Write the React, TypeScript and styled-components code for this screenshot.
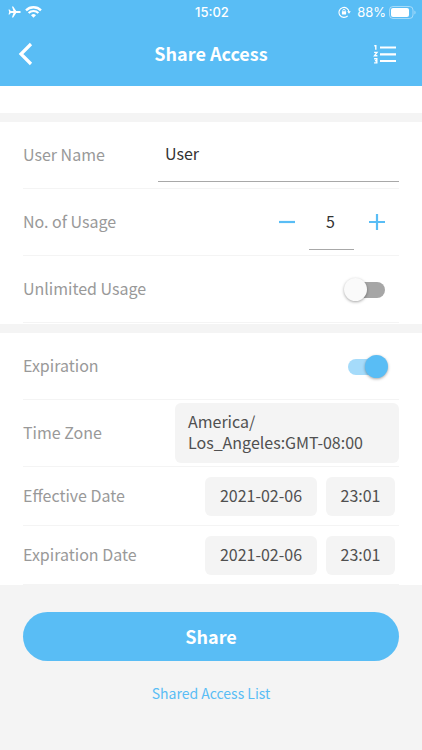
import React, { useState } from "react";
import styled, { createGlobalStyle } from "styled-components";

const blue = "#59bdf5";
const grey = "#f4f4f4";

const GlobalStyle = createGlobalStyle`
  *, *::before, *::after { box-sizing: border-box; }
  html { background: ${grey}; }
  body { margin: 0; }
  body, button, input {
    font-family: "Noto Sans CJK SC", "Open Sans", sans-serif;
    font-size: 16px;
    line-height: 21px;
  }
  button { border: 0; padding: 0; background: none; cursor: pointer; }
`;

const Page = styled.div`
  min-height: 100vh;
  background: ${grey};
`;

const Header = styled.header`
  background: ${blue};
  color: #fff;
`;

const StatusBar = styled.div`
  display: grid;
  grid-template-columns: 1fr auto 1fr;
  align-items: center;
  height: 24px;
  padding: 0 6px 0 8px;
  font-family: Inter, "Liberation Sans", sans-serif;
  font-size: 13px;
`;

const StatusGroup = styled.div<{ $end?: boolean }>`
  display: flex;
  align-items: center;
  justify-content: ${(p) => (p.$end ? "flex-end" : "flex-start")};
  gap: ${(p) => (p.$end ? 3 : 4)}px;
`;

const Clock = styled.span`
  font-weight: 500;
`;

const LockIcon = styled.svg`
  margin-right: 3px;
`;

const NavBar = styled.div`
  display: grid;
  grid-template-columns: 1fr auto 1fr;
  align-items: center;
  height: 62px;
  padding: 0 25px 2px 17px;
`;

const NavButton = styled.button<{ $end?: boolean }>`
  display: flex;
  align-items: center;
  justify-content: ${(p) => (p.$end ? "flex-end" : "flex-start")};
  justify-self: ${(p) => (p.$end ? "end" : "start")};
  width: 40px;
  height: 40px;
  color: #fff;
`;

const Title = styled.h1`
  margin: 0;
  padding: 0 0 2px 8px;
  font-size: 18px;
  line-height: 24px;
  font-weight: 700;
`;

const Spacer = styled.div`
  height: 27px;
  background: #fff;
`;

const Section = styled.section`
  margin-bottom: 9px;
  padding: 0 23px 1px;
  background: #fff;

  &:last-of-type { padding-bottom: 0; }
`;

const Form = styled.form`
  padding-top: 9px;
`;

const Row = styled.div<{ $compact?: boolean }>`
  display: flex;
  align-items: center;
  justify-content: space-between;
  min-height: ${(p) => (p.$compact ? 59 : 67)}px;
  border-bottom: 1px solid #f4f4f4;
  color: #999;
`;

const Label = styled.label`
  padding-bottom: 1px;
`;

const TextInput = styled.input`
  flex: 0 1 241px;
  min-width: 0;
  height: 54px;
  padding: 0 7px 4px;
  border: 0;
  border-bottom: 1px solid #a8a8a8;
  border-radius: 0;
  background: none;
  color: #333;
  outline: none;
`;

const Stepper = styled.div`
  display: flex;
  align-items: center;
`;

const StepButton = styled.button`
  display: flex;
  align-items: center;
  justify-content: center;
  width: 45px;
  height: 45px;
  color: ${blue};
`;

const CountInput = styled.input`
  width: 45px;
  height: 54px;
  margin-top: 1px;
  padding: 0 4px 2px 2px;
  border: 0;
  border-bottom: 1px solid #a8a8a8;
  border-radius: 0;
  background: none;
  color: #333;
  text-align: center;
  outline: none;
`;

const Switch = styled.input`
  appearance: none;
  position: relative;
  width: 44px;
  height: 23px;
  margin: 0 11px 0 0;
  cursor: pointer;

  &::before {
    content: "";
    position: absolute;
    inset: 4px 3px 3px 4px;
    border-radius: 8px;
    background: #a6a6a6;
  }
  &::after {
    content: "";
    position: absolute;
    top: 0;
    left: 0;
    width: 23px;
    height: 23px;
    border-radius: 50%;
    background: #fafafa;
    box-shadow: 0 1px 3px rgba(0, 0, 0, 0.35);
  }
  &:checked::before { background: #a5dbfa; }
  &:checked::after { left: auto; right: 0; background: ${blue}; }
`;

const Chips = styled.div`
  display: flex;
  gap: 9px;
  padding-right: 4px;
`;

const Chip = styled.button<{ $wide?: boolean }>`
  min-width: ${(p) => (p.$wide ? 112 : 69)}px;
  height: 39px;
  padding: 0 14px 2px;
  border-radius: 6px;
  background: ${grey};
  color: #505050;
  white-space: nowrap;
`;

const ZoneButton = styled.button`
  flex: 0 1 224px;
  padding: 8px 13px 10px;
  border-radius: 6px;
  background: ${grey};
  color: #505050;
  text-align: left;
`;

const Actions = styled.div`
  display: flex;
  flex-direction: column;
  align-items: center;
  gap: 22px;
  padding: 18px 23px 44px;
`;

const ShareButton = styled.button`
  width: 100%;
  height: 49px;
  border-radius: 25px;
  background: ${blue};
  color: #fff;
  font-size: 18px;
  font-weight: 700;
`;

const ListLink = styled.a`
  color: ${blue};
  font-size: 14px;
  text-decoration: none;
`;

const Plane = () => (
  <svg width="13" height="12" viewBox="0 0 13 12" fill="currentColor" aria-hidden="true">
    <path d="M12.8 6c0-.6-.7-1-1.6-1H8.200L5.200.4H3.900L5.500 5H2.800L1.500 3.400H.5L1.200 6 .5 8.600h1L2.800 7h2.700L3.900 11.600h1.300L8.200 7h3c.9 0 1.600-.4 1.600-1z" />
  </svg>
);

const Wifi = () => (
  <svg width="17" height="12" viewBox="0 0 17 12" fill="none" stroke="currentColor" aria-hidden="true">
    <path d="M1 4.300a10.800 10.800 0 0 1 15 0" strokeWidth="2.300" />
    <path d="M3.600 7a7 7 0 0 1 9.800 0" strokeWidth="2.200" />
    <path d="M8.500 11.800 6 9.200a3.600 3.600 0 0 1 5 0z" fill="currentColor" stroke="none" />
  </svg>
);

const RotationLock = () => (
  <LockIcon width="13" height="12" viewBox="0 0 13 12" fill="none" stroke="currentColor" aria-hidden="true">
    <path d="M9.700 9.800A5 5 0 1 1 11 6" strokeWidth="1.100" />
    <path d="M9.200 5.300h3.600L11 7.700z" fill="currentColor" stroke="none" />
    <rect x="3.900" y="5.300" width="4.200" height="3.300" rx=".5" fill="currentColor" stroke="none" />
    <path d="M4.800 5.500V4.500a1.200 1.200 0 0 1 2.400 0v1" strokeWidth=".9" />
  </LockIcon>
);

const Battery = () => (
  <svg width="27" height="13" viewBox="0 0 27 13" aria-hidden="true">
    <rect x=".5" y=".5" width="23.500" height="12" rx="3.500" fill="none" stroke="#fff" strokeOpacity=".45" />
    <rect x="2" y="2" width="18" height="9" rx="2" fill="#fff" />
    <path d="M25.400 4.500c1.600.7 1.600 3.300 0 4z" fill="#fff" fillOpacity=".45" />
  </svg>
);

const BackIcon = () => (
  <svg width="16" height="24" viewBox="0 0 16 24" fill="none" stroke="currentColor" strokeWidth="3.200" aria-hidden="true">
    <path d="M14 2 4 12l10 10" />
  </svg>
);

const NumberedListIcon = () => (
  <svg width="24" height="20" viewBox="0 0 24 20" fill="none" stroke="currentColor" aria-hidden="true">
    <path d="M7 3.500h16M7 10.300h16M7 17h16" strokeWidth="2.200" />
    <path d="M1.300 1.700h1.500v4M1.100 8.400h2.900L1.500 11.700h2.900M1.100 14.700h2.700v2H1.900M3.800 16.700v2.200H1.100" strokeWidth="1.400" />
  </svg>
);

const StepIcon = ({ plus }: { plus?: boolean }) => (
  <svg width="16" height="16" viewBox="0 0 16 16" stroke="currentColor" strokeWidth="2.200" aria-hidden="true">
    <path d={plus ? "M0 8h16M8 0v16" : "M0 8h16"} />
  </svg>
);

interface DateRowProps {
  label: string;
  date: string;
  time: string;
}

const DateRow = ({ label, date, time }: DateRowProps) => (
  <Row $compact role="group" aria-label={label}>
    <Label as="span">{label}</Label>
    <Chips>
      <Chip $wide type="button">{date}</Chip>
      <Chip type="button">{time}</Chip>
    </Chips>
  </Row>
);

export default function App() {
  const [name, setName] = useState("User");
  const [count, setCount] = useState(5);
  const [unlimited, setUnlimited] = useState(false);
  const [expires, setExpires] = useState(true);

  return (
    <Page>
      <GlobalStyle />
      <Header>
        <StatusBar>
          <StatusGroup><Plane /><Wifi /></StatusGroup>
          <Clock>15:02</Clock>
          <StatusGroup $end><RotationLock /><span>88%</span><Battery /></StatusGroup>
        </StatusBar>
        <NavBar>
          <NavButton type="button" aria-label="Back"><BackIcon /></NavButton>
          <Title>Share Access</Title>
          <NavButton $end type="button" aria-label="List"><NumberedListIcon /></NavButton>
        </NavBar>
      </Header>
      <Spacer />
      <Form onSubmit={(e) => e.preventDefault()}>
        <Section>
          <Row>
            <Label htmlFor="name">User Name</Label>
            <TextInput id="name" value={name} onChange={(e) => setName(e.target.value)} />
          </Row>
          <Row>
            <Label htmlFor="count">No. of Usage</Label>
            <Stepper>
              <StepButton type="button" aria-label="Decrease" onClick={() => setCount(Math.max(0, count - 1))}>
                <StepIcon />
              </StepButton>
              <CountInput id="count" inputMode="numeric" value={count} onChange={(e) => setCount(Number(e.target.value) || 0)} />
              <StepButton type="button" aria-label="Increase" onClick={() => setCount(count + 1)}>
                <StepIcon plus />
              </StepButton>
            </Stepper>
          </Row>
          <Row>
            <Label htmlFor="unlimited">Unlimited Usage</Label>
            <Switch id="unlimited" type="checkbox" checked={unlimited} onChange={(e) => setUnlimited(e.target.checked)} />
          </Row>
        </Section>
        <Section>
          <Row>
            <Label htmlFor="expires">Expiration</Label>
            <Switch id="expires" type="checkbox" checked={expires} onChange={(e) => setExpires(e.target.checked)} />
          </Row>
          <Row>
            <Label htmlFor="zone">Time Zone</Label>
            <ZoneButton id="zone" type="button">America/<wbr />Los_Angeles:GMT-08:00</ZoneButton>
          </Row>
          <DateRow label="Effective Date" date="2021-02-06" time="23:01" />
          <DateRow label="Expiration Date" date="2021-02-06" time="23:01" />
        </Section>
        <Actions>
          <ShareButton type="submit">Share</ShareButton>
          <ListLink href="#shared">Shared Access List</ListLink>
        </Actions>
      </Form>
    </Page>
  );
}
